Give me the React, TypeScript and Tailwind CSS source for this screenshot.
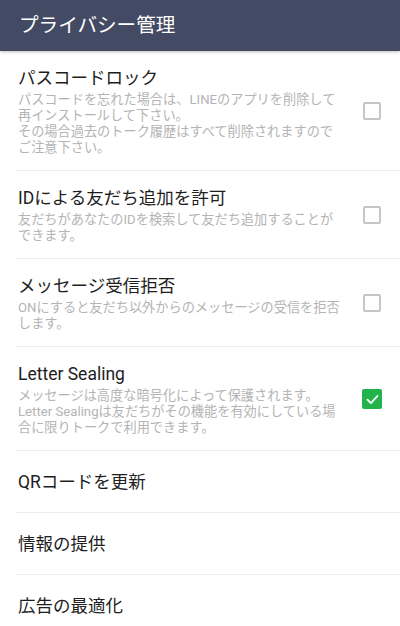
const font = { fontFamily: 'Roboto, "Noto Sans CJK JP", sans-serif' }

type Setting = {
  title: string
  lines?: string[]
  checked?: boolean
}

const settings: Setting[] = [
  {
    title: 'パスコードロック',
    lines: [
      'パスコードを忘れた場合は、LINEのアプリを削除して',
      '再インストールして下さい。',
      'その場合過去のトーク履歴はすべて削除されますので',
      'ご注意下さい。',
    ],
    checked: false,
  },
  {
    title: 'IDによる友だち追加を許可',
    lines: ['友だちがあなたのIDを検索して友だち追加することが', 'できます。'],
    checked: false,
  },
  {
    title: 'メッセージ受信拒否',
    lines: ['ONにすると友だち以外からのメッセージの受信を拒否', 'します。'],
    checked: false,
  },
  {
    title: 'Letter Sealing',
    lines: [
      'メッセージは高度な暗号化によって保護されます。',
      'Letter Sealingは友だちがその機能を有効にしている場',
      '合に限りトークで利用できます。',
    ],
    checked: true,
  },
  { title: 'QRコードを更新' },
  { title: '情報の提供' },
  { title: '広告の最適化' },
]

function Checkbox({ checked }: { checked: boolean }) {
  if (checked) {
    return (
      <div className="w-[20px] h-[20px] rounded-[2px] bg-[#22b34b] flex items-center justify-center">
        <svg width="15" height="15" viewBox="0 0 14 14" fill="none">
          <path d="M2.3 7.2 L5.5 10.3 L11.7 3.7" stroke="white" strokeWidth="1.7" strokeLinecap="round" strokeLinejoin="round" />
        </svg>
      </div>
    )
  }
  return <div className="w-[18px] h-[18px] mx-[1px] rounded-[2px] border-2 border-[#c6c6ca] bg-white" />
}

function Row({ s }: { s: Setting }) {
  if (!s.lines) {
    return (
      <div className="ml-[16px] pl-[2px] h-[62px] flex items-center border-b border-[#ececec] shrink-0">
        <span className="text-[17.5px] leading-[24px] text-[#1e1e1e]">{s.title}</span>
      </div>
    )
  }
  return (
    <div className="ml-[16px] pl-[2px] pr-[18px] pt-[15px] pb-[14px] flex items-center border-b border-[#ececec] shrink-0">
      <div className="flex-1 min-w-0">
        <div className="text-[17.5px] leading-[24px] text-[#1e1e1e]">{s.title}</div>
        <div className="mt-[2px] text-[13.2px] leading-[16px] text-[#b4b4b4] whitespace-nowrap">
          {s.lines.map((l, i) => (
            <div key={i}>{l}</div>
          ))}
        </div>
      </div>
      <Checkbox checked={!!s.checked} />
    </div>
  )
}

export default function App() {
  return (
    <div className="w-[400px] h-[626px] bg-white overflow-hidden flex flex-col" style={font}>
      <div className="h-[51px] shrink-0 bg-[#434a63] flex items-center pl-[19px] shadow-[0_1px_3px_rgba(0,0,0,0.25)] relative z-10">
        <span className="text-white text-[19.6px] leading-none">プライバシー管理</span>
      </div>
      {settings.map((s) => (
        <Row key={s.title} s={s} />
      ))}
    </div>
  )
}
